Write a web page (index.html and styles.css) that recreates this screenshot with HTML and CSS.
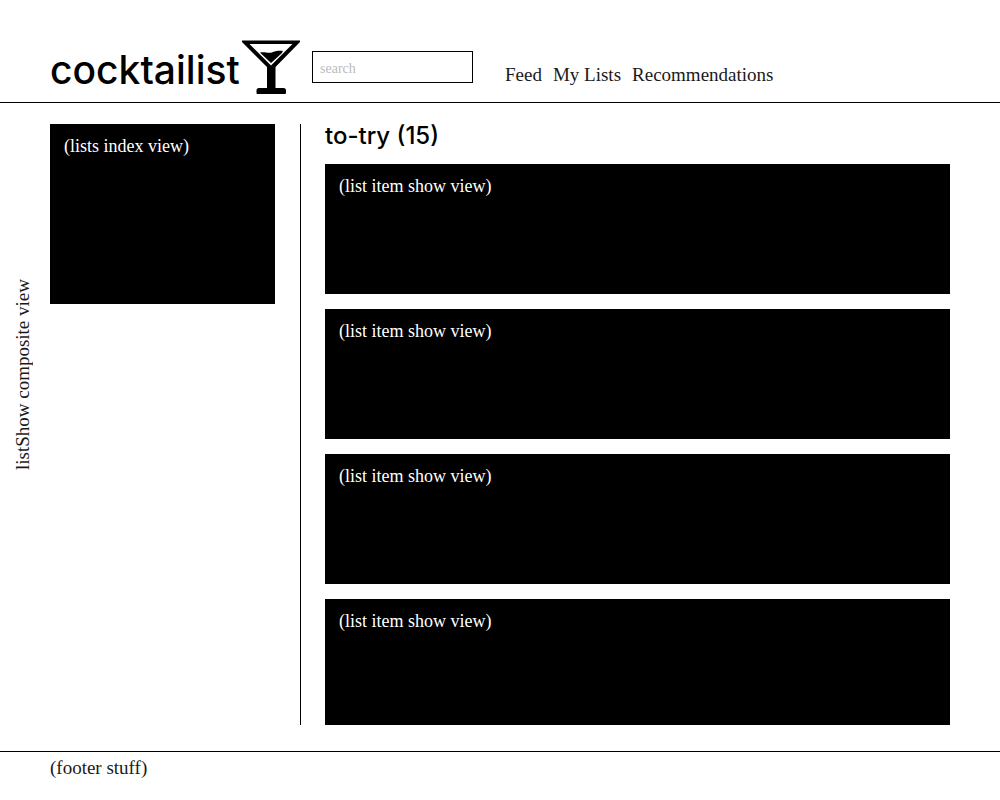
FILE: index.html
```html
<!DOCTYPE html>
<html lang="en">
<head>
<meta charset="utf-8">
<meta name="viewport" content="width=device-width, initial-scale=1">
<title>cocktailist</title>
<link rel="stylesheet" href="styles.css">
</head>
<body>
<div class="page">
  <header class="header">
    <a class="logo" href="#">
      <span class="logo-text">cocktailist</span>
      <svg class="logo-glass" viewBox="0 0 58 54" aria-hidden="true">
        <path fill-rule="evenodd" d="M0 0.500H58V2L33.500 27V48H41.500Q44 48 44 50.500V53Q44 54 43 54H15.500Q14.500 54 14.500 53V50.500Q14.500 48 17 48H25V27L0 2ZM7.500 4L29 25.500L50.500 4Z"/>
        <path d="M18 12.500C24 11.500 26 14 31 12C34 10.800 38 10.500 41 11L39.500 13.500L29 23L19.500 14Z"/>
      </svg>
    </a>
    <form class="search" role="search">
      <input class="search-box" type="search" placeholder="search" aria-label="search">
    </form>
    <nav class="nav">
      <a href="#">Feed</a>
      <a href="#">My Lists</a>
      <a href="#">Recommendations</a>
    </nav>
  </header>
  <main class="main">
    <div class="view-name"><span>listShow composite view</span></div>
    <aside class="sidebar">
      <section class="panel panel-index">(lists index view)</section>
    </aside>
    <section class="content">
      <h1 class="title">to-try (15)</h1>
      <ul class="items">
        <li class="panel">(list item show view)</li>
        <li class="panel">(list item show view)</li>
        <li class="panel">(list item show view)</li>
        <li class="panel">(list item show view)</li>
      </ul>
    </section>
  </main>
  <footer class="footer">(footer stuff)</footer>
</div>
</body>
</html>
```
FILE: styles.css
```css
* {
  box-sizing: border-box;
}

body {
  margin: 0;
  background: #fff;
  color: #1a1a1a;
  font-family: "Liberation Serif", serif;
  font-size: 19px;
  line-height: 24px;
}

a {
  color: inherit;
  text-decoration: none;
}

.page {
  display: flex;
  flex-direction: column;
  min-height: 100vh;
}

.header {
  display: flex;
  align-items: flex-start;
  padding: 40px 50px 8px;
  border-bottom: 1px solid #000;
}

.logo {
  display: flex;
  justify-content: space-between;
  width: 250px;
  color: #000;
}

.logo-text {
  padding-top: 6px;
  font-family: Inter, sans-serif;
  font-size: 39px;
  font-weight: 500;
  line-height: 48px;
}

.logo-glass {
  flex: none;
  width: 58px;
  height: 54px;
}

.search {
  margin: 11px 32px 0 12px;
}

.search-box {
  display: block;
  width: 161px;
  height: 32px;
  padding: 3px 7px 0;
  border: 1px solid #000;
  border-radius: 0;
  outline: 0;
  appearance: none;
  background: #fff;
  font-family: inherit;
  font-size: 14px;
}

.search-box::placeholder {
  color: #bbb;
  opacity: 1;
}

.nav {
  display: flex;
  gap: 11px;
  padding-top: 23px;
}

.main {
  display: flex;
  flex: 1;
  padding: 21px 50px 26px 0;
}

.view-name {
  display: flex;
  align-items: center;
  justify-content: center;
  width: 50px;
  padding: 0 4px 100px 0;
}

.view-name span {
  writing-mode: vertical-rl;
  transform: rotate(180deg);
}

.sidebar {
  width: 251px;
  padding-right: 25px;
  border-right: 1px solid #000;
}

.panel {
  min-height: 130px;
  padding: 10px 14px;
  background: #000;
  color: #fff;
  font-size: 18px;
}

.panel-index {
  min-height: 180px;
}

.content {
  flex: 1;
  padding-left: 24px;
}

.title {
  margin: 0 0 17px;
  color: #000;
  font-family: Inter, sans-serif;
  font-size: 24px;
  font-weight: 500;
  line-height: 23px;
}

.items {
  display: grid;
  gap: 15px;
  margin: 0;
  padding: 0;
  list-style: none;
}

.items .panel:last-child {
  min-height: 126px;
}

.footer {
  padding: 4px 50px 20px;
  border-top: 1px solid #000;
}
```
